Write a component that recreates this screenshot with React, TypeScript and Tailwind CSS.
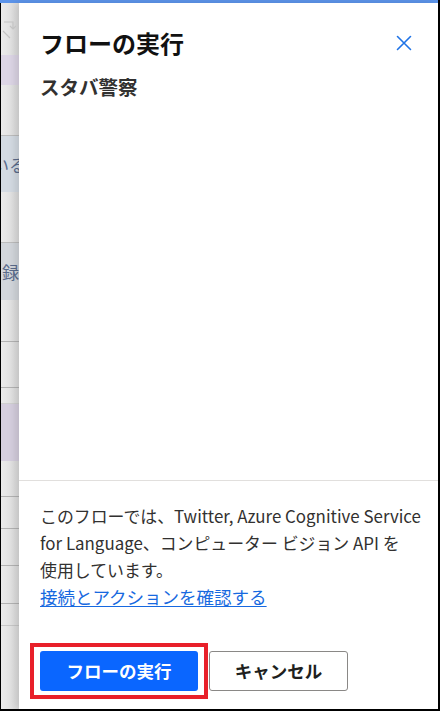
const JP = { fontFamily: '"Noto Sans CJK JP", "Noto Sans", sans-serif' };

function CloseIcon() {
  return (
    <svg width="16" height="16" viewBox="0 0 16 16" fill="none">
      <path d="M1.5 1.5 L14.5 14.5 M14.5 1.5 L1.5 14.5" stroke="#1f73e6" strokeWidth="1.6" strokeLinecap="round" />
    </svg>
  );
}

// 背面ページの切れ端
function BackStrip() {
  return (
    <div className="w-[18px] flex flex-col overflow-hidden bg-gradient-to-r from-[#ebebeb] to-[#dcdcdc] text-[#5a6b8c] text-[17px] leading-none" style={JP}>
      <div className="h-[52px] relative">
        <svg className="absolute left-[1px] top-[16px]" width="14" height="20" viewBox="0 0 14 20" fill="none">
          <path d="M2 3 H11 V10 M8 7 L11 10 L14 7 M1 12 L8 19" stroke="#c4c4c4" strokeWidth="1.2" />
        </svg>
      </div>
      <div className="h-[30px] bg-[#ddd6e6]" />
      <div className="h-[51px] border-b border-[#bdbdbd]" />
      <div className="h-[56px] bg-[#d4dbe3] flex items-center overflow-hidden">
        <span className="-ml-[9px] whitespace-nowrap">いる</span>
      </div>
      <div className="h-[51px] border-b border-[#bdbdbd]" />
      <div className="h-[57px] bg-[#d3d7dc] flex items-center overflow-hidden">
        <span className="ml-[1px] whitespace-nowrap">録</span>
      </div>
      <div className="h-[42px] border-b border-[#b3b3b3]" />
      <div className="h-[46px] border-b border-[#b3b3b3]" />
      <div className="h-[16px] border-b border-[#d0d0d0]" />
      <div className="h-[57px] bg-[#d6cfdf]" />
      <div className="h-[36px] border-b border-[#b3b3b3]" />
      <div className="h-[32px] border-b border-[#b3b3b3]" />
      <div className="h-[37px] border-b border-[#b3b3b3]" />
      <div className="h-[38px] border-b border-[#b3b3b3]" />
      <div className="h-[22px] border-b border-[#c8c8c8]" />
      <div className="flex-1" />
    </div>
  );
}

export default function App() {
  return (
    <div className="w-[440px] h-[711px] flex flex-col bg-black overflow-hidden">
      <div className="h-[3px] bg-[#5c94ea] mr-[2px]" />
      <div className="flex-1 flex min-h-0 mb-[2px]">
        <div className="w-[1px] bg-black" />
        <BackStrip />
        <div className="flex-1 bg-white flex flex-col shadow-[-4px_0_8px_rgba(0,0,0,0.12)]" style={JP}>
          <div className="flex items-start justify-between pl-[21px] pr-[26px] pt-[24px]">
            <h1 className="text-[24px] leading-[32px] font-bold text-[#111]">フローの実行</h1>
            <button className="mt-[8px]"><CloseIcon /></button>
          </div>
          <div className="pl-[21px] mt-[14px] text-[19.5px] leading-[28px] font-semibold text-[#323130]">スタバ警察</div>

          <div className="flex-1" />

          <div className="border-t border-[#e1dfdd] pl-[21px] pr-[12px] pt-[21px]">
            <div className="text-[16.9px] leading-[27px] text-[#323130]">
              <div className="whitespace-nowrap">このフローでは、Twitter, Azure Cognitive Service</div>
              <div className="whitespace-nowrap">for Language、コンピューター ビジョン API を</div>
              <div className="whitespace-nowrap">使用しています。</div>
              <a href="#" className="block text-[17.5px] text-[#1769e0] underline underline-offset-2 w-fit">接続とアクションを確認する</a>
            </div>

            <div className="flex items-center mt-[33px] -ml-[10px] mb-[10px]">
              <div className="border-4 border-[#e8202a] px-[6px] py-[4px]">
                <button className="w-[158px] h-[40px] rounded-[3px] bg-[#0a66ff] text-white text-[17.5px] font-bold">フローの実行</button>
              </div>
              <button className="ml-[1px] w-[139px] h-[40px] rounded-[3px] border border-[#8a8886] bg-white text-[#201f1e] text-[17.5px] font-bold">キャンセル</button>
            </div>
          </div>
        </div>
        <div className="w-[2px] bg-black" />
      </div>
    </div>
  );
}
